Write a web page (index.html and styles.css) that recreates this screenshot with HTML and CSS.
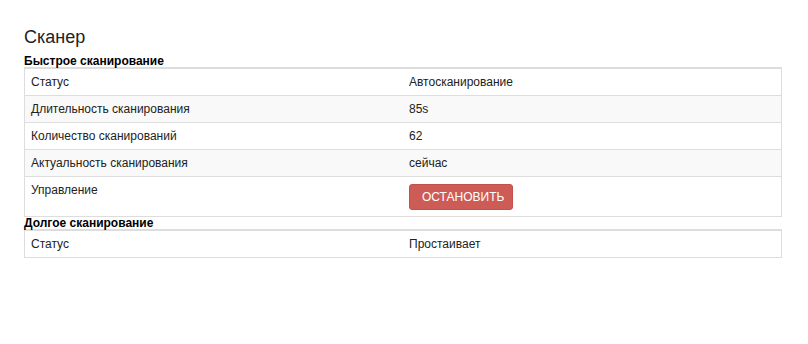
FILE: index.html
```html
<!DOCTYPE html>
<html lang="ru">
  <head>
    <meta charset="UTF-8" />
    <meta name="viewport" content="width=device-width, initial-scale=1.0" />
    <title>Сканер</title>
    <link rel="stylesheet" href="styles.css">
  </head>
  <body>
    <div class="scanner">
      <h1 class="title">Сканер</h1>

      <h2 class="block-title">Быстрое сканирование</h2>
      <table class="status-table">
        <tbody>
          <tr>
            <td>Статус</td>
            <td>Автосканирование</td>
          </tr>
          <tr>
            <td>Длительность сканирования</td>
            <td>85s</td>
          </tr>
          <tr>
            <td>Количество сканирований</td>
            <td>62</td>
          </tr>
          <tr>
            <td>Актуальность сканирования</td>
            <td>сейчас</td>
          </tr>
          <tr>
            <td>Управление</td>
            <td><button class="btn-stop" type="button">Остановить</button></td>
          </tr>
        </tbody>
      </table>

      <h2 class="block-title">Долгое сканирование</h2>
      <table class="status-table">
        <tbody>
          <tr>
            <td>Статус</td>
            <td>Простаивает</td>
          </tr>
        </tbody>
      </table>
    </div>
  </body>
</html>
```

FILE: styles.css
```css
body {
  font-family: "Liberation Sans", Arial, sans-serif;
  margin: 0;
  padding: 0;
  background-color: #fff;
  color: #222;
}
.scanner {
  width: 758px;
  margin: 0 0 0 24px;
  padding-top: 26px;
}
.title {
  font-size: 18px;
  font-weight: normal;
  line-height: 22px;
  margin: 0 0 7px;
}
.block-title {
  font-size: 12px;
  font-weight: bold;
  line-height: 12px;
  margin: 0;
  color: #000;
}
.status-table {
  width: 100%;
  border-collapse: collapse;
  border: 1px solid #ddd;
  border-top: 2px solid #ddd;
  font-size: 12px;
}
.status-table td {
  width: 50%;
  padding: 5px 6px;
  line-height: 16px;
  border-top: 1px solid #ddd;
  vertical-align: top;
  text-align: left;
}
.status-table tr:nth-child(even) td {
  background-color: #f9f9f9;
}
.btn-stop {
  font-family: inherit;
  font-size: 12px;
  text-transform: uppercase;
  color: #fff;
  background-color: #cd5c57;
  border: 1px solid #c4504b;
  border-radius: 3px;
  padding: 5px 12px;
  line-height: 14px;
  margin: 2px 0 1px;
  width: 104px;
  height: 26px;
  cursor: pointer;
}
```
